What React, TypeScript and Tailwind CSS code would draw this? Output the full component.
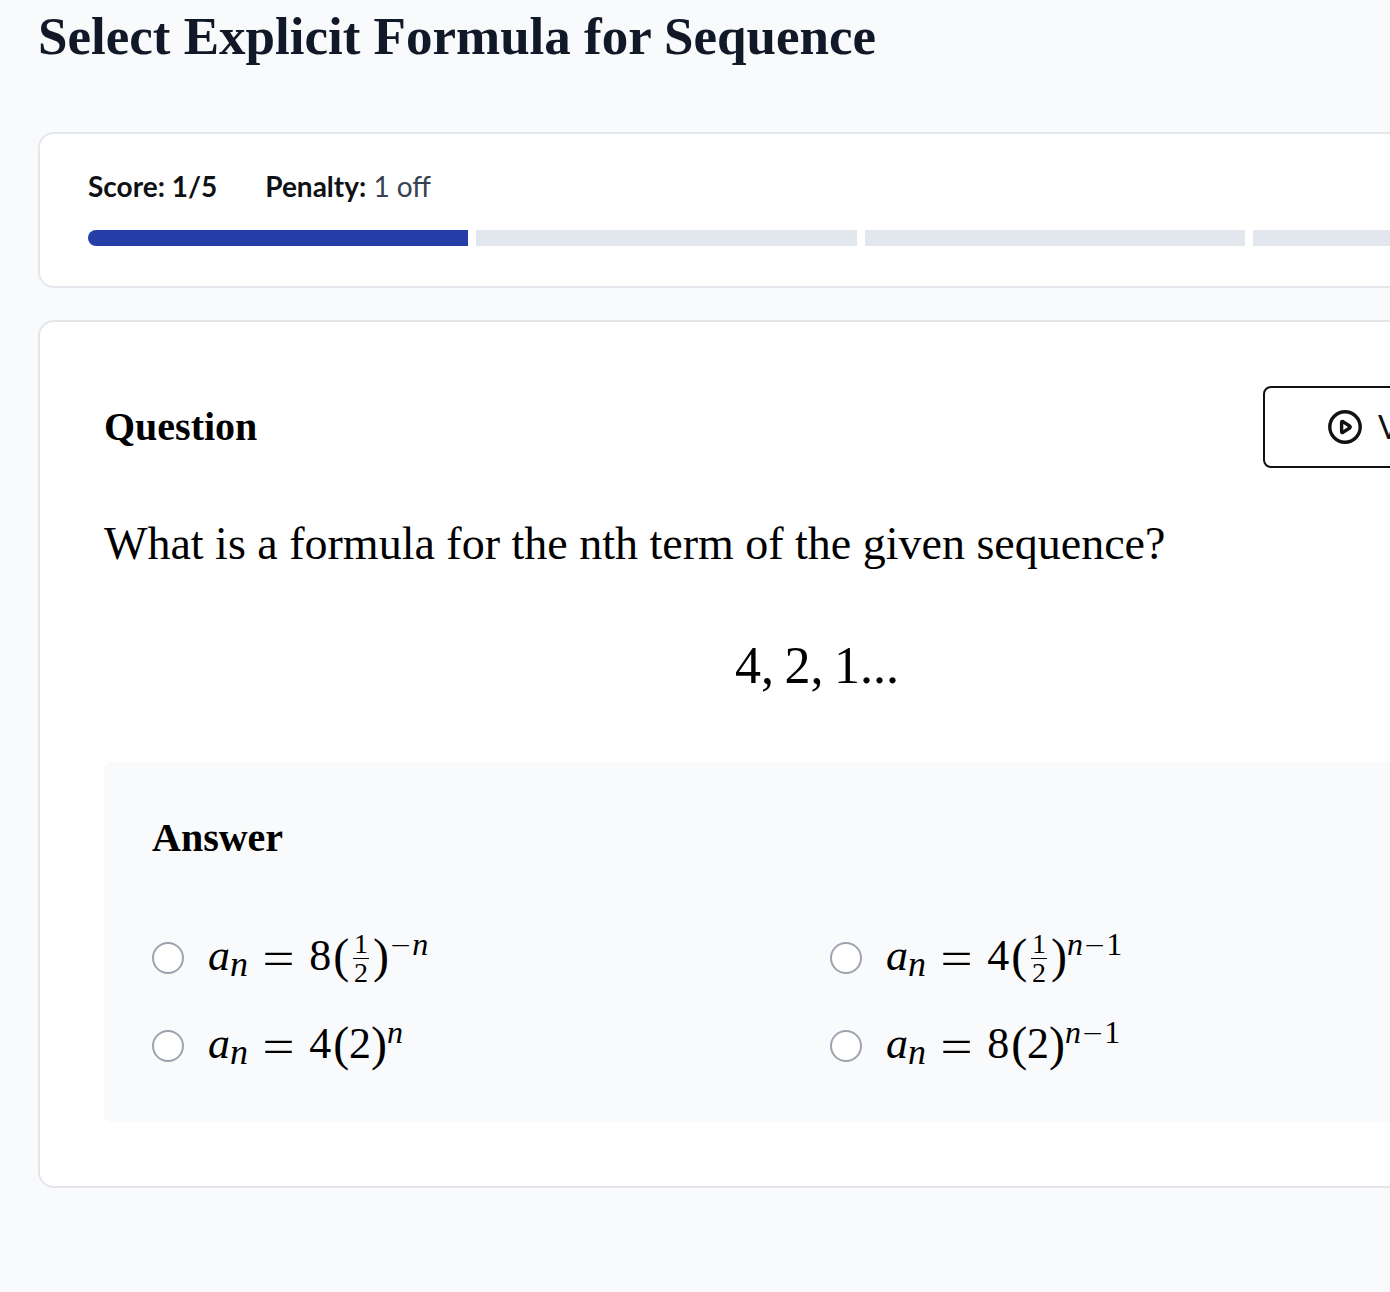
import { useState } from "react";
import type { ReactNode } from "react";

const TOTAL = 5;

function PlayIcon() {
    return (
        <svg viewBox="0 0 34 34" className="w-[34px] h-[34px] shrink-0" fill="none" stroke="currentColor" strokeWidth="3.4" strokeLinejoin="round" aria-hidden="true">
            <circle cx="17" cy="17" r="15.2" />
            <path d="M13.6 12.4 Q13.6 10.9 14.9 11.6 L21.6 16 Q22.8 17 21.6 18 L14.9 22.4 Q13.6 23.1 13.6 21.6 Z" />
        </svg>
    );
}

function Half() {
    return (
        <span className="inline-flex flex-col items-center mx-1 pt-1 text-[28px] leading-7">
            <span className="px-px border-b border-black">1</span>
            <span>2</span>
        </span>
    );
}

function Formula({ factor, base, exponent }: { factor: string; base: ReactNode; exponent: ReactNode }) {
    return (
        <span className="flex items-center h-16 pb-1 text-[44px] leading-[44px] text-black">
            <span className="italic">a</span>
            <span className="italic text-[36px] pt-4">n</span>
            <span className="mx-3 font-[Lato] font-light text-[64px]">=</span>
            <span>{factor}</span>
            <span className="ml-0.5 text-[48px]">(</span>
            {base}
            <span className="text-[48px]">)</span>
            <span className="flex items-center text-[32px] pb-6">{exponent}</span>
        </span>
    );
}

const N = <i>n</i>;
const MINUS = <span className="font-[Lato] font-light text-[40px]">−</span>;

const OPTIONS = [
    { id: "a", factor: "8", base: <Half />, exponent: <>{MINUS}{N}</> },
    { id: "b", factor: "4", base: <Half />, exponent: <>{N}{MINUS}1</> },
    { id: "c", factor: "4", base: "2", exponent: N },
    { id: "d", factor: "8", base: "2", exponent: <>{N}{MINUS}1</> },
];

export default function App() {
    const [score] = useState(1);
    const [answer, setAnswer] = useState("");

    return (
        <div className="min-h-screen overflow-x-hidden bg-[#f9fafc] font-['Liberation_Serif',serif]">
            <main className="min-w-[2110px] px-[38px] pb-10">
                <h1 className="pt-1 text-[53px] leading-[64px] font-bold text-[#111827]">Select Explicit Formula for Sequence</h1>

                <section className="mt-16 rounded-2xl border-2 border-[#e3e7ec] bg-white px-12 pt-8 pb-10">
                    <div className="flex gap-12 mb-6 font-[Lato,sans-serif] text-[28px] leading-10 text-[#0f1214]">
                        <p className="font-bold">Score: {score}/{TOTAL}</p>
                        <p><span className="font-bold">Penalty:</span> <span className="text-[#374151]">1 off</span></p>
                    </div>
                    <div className="grid grid-cols-5 gap-2 h-4 rounded-full overflow-hidden">
                        {Array.from({ length: TOTAL }, (_, i) => (
                            <div key={i} className={i < score ? "bg-[#263ea8]" : "bg-[#e2e7ed]"} />
                        ))}
                    </div>
                </section>

                <section className="mt-8 w-[1558px] rounded-2xl border-2 border-[#e3e5e9] bg-white p-16">
                    <div className="flex items-center justify-between">
                        <h2 className="text-[40px] leading-[56px] font-bold text-black">Question</h2>
                        <button type="button" className="flex items-center gap-4 w-[267px] h-[82px] px-[63px] rounded-lg border-2 border-[#0f1214] bg-white font-[Lato,sans-serif] text-[32px] text-[#0f1214]">
                            <PlayIcon />
                            Video
                        </button>
                    </div>

                    <p className="mt-11 text-[46px] leading-[64px] text-black">What is a formula for the nth term of the given sequence?</p>
                    <p className="mt-[58px] text-center text-[52px] leading-[64px] text-black">4,&thinsp;2,&thinsp;1...</p>

                    <fieldset className="mt-16 rounded-lg bg-[#f9fafc] px-12 pt-12 pb-11">
                        <h2 id="answer-heading" className="text-[40px] leading-[56px] font-bold text-black">Answer</h2>
                        <div role="radiogroup" aria-labelledby="answer-heading" className="grid grid-cols-2 gap-x-[26px] gap-y-6 mt-[60px]">
                            {OPTIONS.map((o) => (
                                <label key={o.id} className="flex items-center gap-6">
                                    <input type="radio" name="answer" value={o.id} checked={answer === o.id} onChange={() => setAnswer(o.id)}
                                        className="appearance-none shrink-0 w-8 h-8 rounded-full border-2 border-[#9ca3af] bg-white checked:border-8 checked:border-[#263ea8]" />
                                    <Formula factor={o.factor} base={o.base} exponent={o.exponent} />
                                </label>
                            ))}
                        </div>
                    </fieldset>
                </section>
            </main>
        </div>
    );
}
